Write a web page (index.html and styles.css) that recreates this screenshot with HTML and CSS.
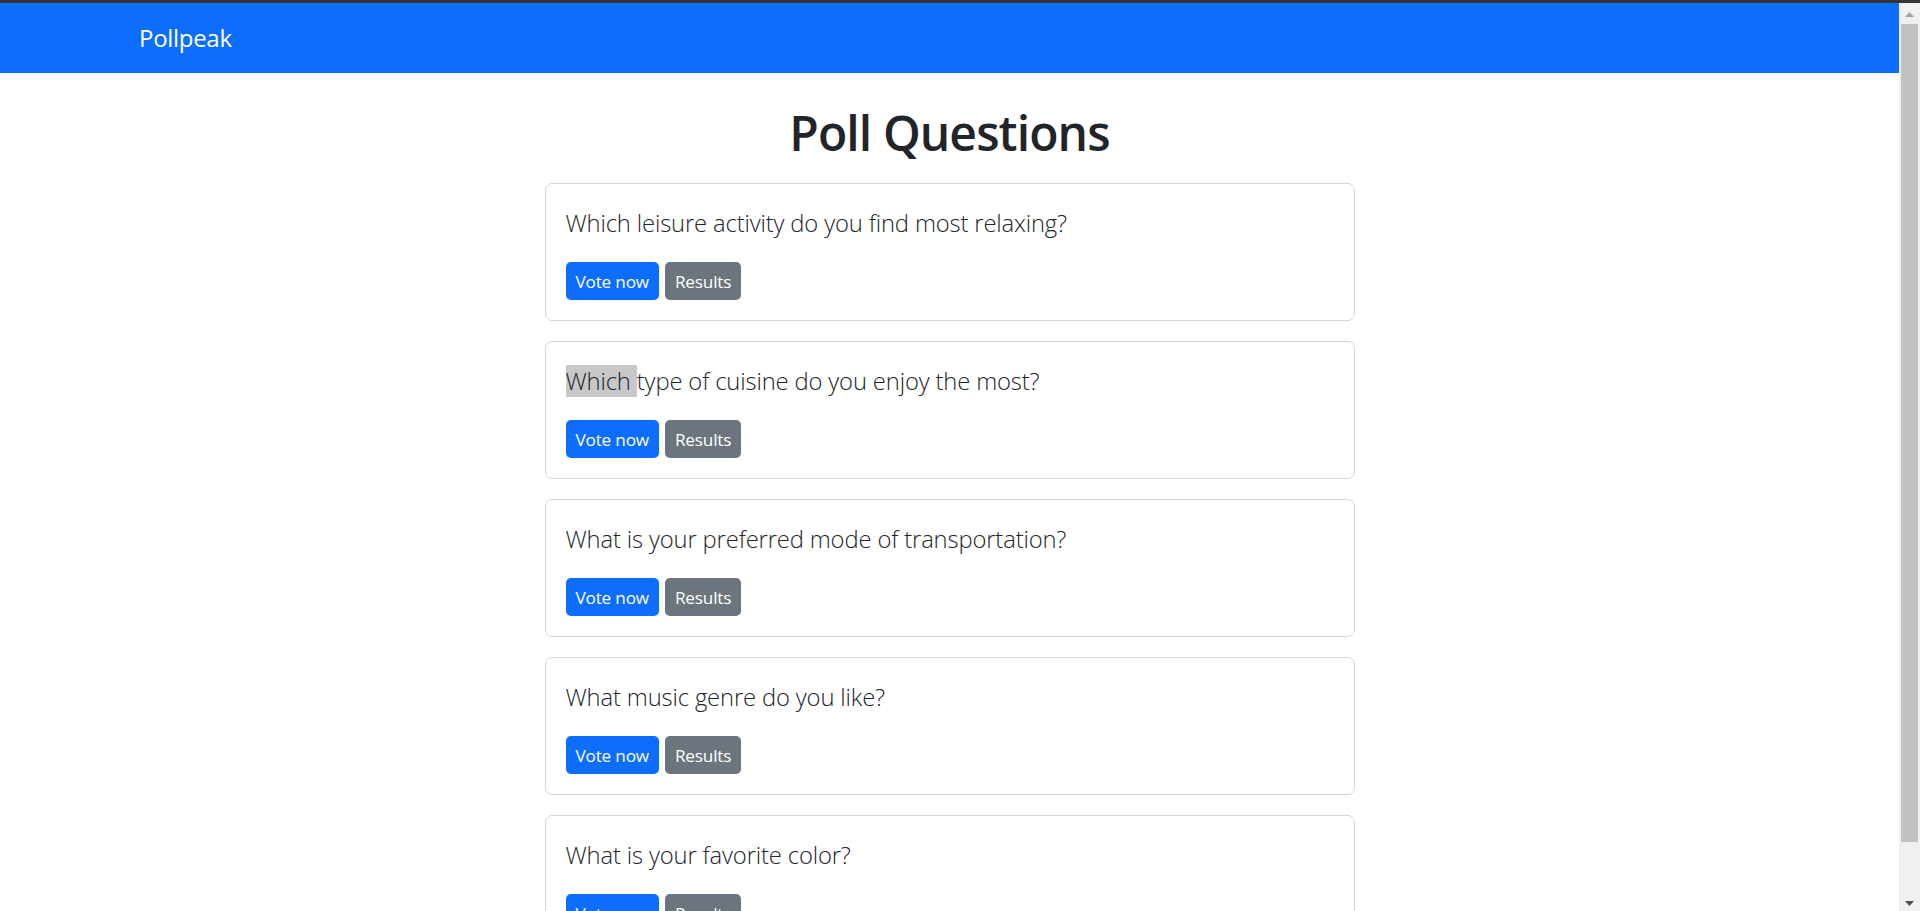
FILE: index.html
```html
<!DOCTYPE html>
<html lang="en">
<head>
<meta charset="utf-8">
<title>Pollpeak</title>
<link rel="stylesheet" href="styles.css">
</head>
<body>
<div class="window">
  <div class="top-strip"></div>
  <div class="viewport">
    <div class="page">
      <nav class="navbar">
        <a class="brand" href="#">Pollpeak</a>
      </nav>
      <main class="container">
        <h1 class="title">Poll Questions</h1>
        <div class="poll-list">
          <div class="card">
            <p class="lead">Which leisure activity do you find most relaxing?</p>
            <div class="actions">
              <a class="btn btn-primary" href="#">Vote now</a>
              <a class="btn btn-secondary" href="#">Results</a>
            </div>
          </div>
          <div class="card">
            <p class="lead"><span class="selected">Which </span>type of cuisine do you enjoy the most?</p>
            <div class="actions">
              <a class="btn btn-primary" href="#">Vote now</a>
              <a class="btn btn-secondary" href="#">Results</a>
            </div>
          </div>
          <div class="card">
            <p class="lead">What is your preferred mode of transportation?</p>
            <div class="actions">
              <a class="btn btn-primary" href="#">Vote now</a>
              <a class="btn btn-secondary" href="#">Results</a>
            </div>
          </div>
          <div class="card">
            <p class="lead">What music genre do you like?</p>
            <div class="actions">
              <a class="btn btn-primary" href="#">Vote now</a>
              <a class="btn btn-secondary" href="#">Results</a>
            </div>
          </div>
          <div class="card">
            <p class="lead">What is your favorite color?</p>
            <div class="actions">
              <a class="btn btn-primary" href="#">Vote now</a>
              <a class="btn btn-secondary" href="#">Results</a>
            </div>
          </div>
        </div>
      </main>
    </div>
    <div class="scrollbar">
      <div class="sb-button sb-up">
        <svg width="9" height="5" viewBox="0 0 9 5"><polygon points="0,5 4.5,0 9,5" fill="#a3a3a3"/></svg>
      </div>
      <div class="sb-track"><div class="sb-thumb"></div></div>
      <div class="sb-button sb-down">
        <svg width="9" height="5" viewBox="0 0 9 5"><polygon points="0,0 9,0 4.5,5" fill="#505050"/></svg>
      </div>
    </div>
  </div>
</div>
</body>
</html>
```

FILE: styles.css
```css
html, body {
  margin: 0;
  padding: 0;
  height: 100%;
  overflow: hidden;
  background: #ffffff;
}

body {
  font-family: "Open Sans", "Noto Sans", "Liberation Sans", sans-serif;
  color: #212529;
}

.window {
  height: 100vh;
  display: flex;
  flex-direction: column;
}

.top-strip {
  height: 3px;
  flex: 0 0 3px;
  background: #353535;
}

.viewport {
  flex: 1;
  min-height: 0;
  display: flex;
}

.page {
  flex: 1;
  min-width: 0;
  overflow: hidden;
}

/* Navbar */
.navbar {
  height: 70px;
  background: #0d6efd;
  display: flex;
  align-items: center;
  padding-left: 139px;
}

.brand {
  color: #ffffff;
  text-decoration: none;
  font-size: 24px;
  font-weight: 400;
  line-height: 30px;
  letter-spacing: -0.3px;
}

/* Content */
.container {
  width: 810px;
  margin: 0 auto;
  padding-bottom: 10px;
}

.title {
  margin: 30px 0 20px;
  font-size: 48px;
  font-weight: 600;
  line-height: 60px;
  text-align: center;
  color: #212529;
  letter-spacing: -0.9px;
}

.poll-list {
  display: flex;
  flex-direction: column;
  gap: 20px;
}

.card {
  border: 1px solid #d6d6d6;
  border-radius: 7px;
  padding: 20px;
}

.lead {
  margin: 0 0 20px;
  font-size: 23.8px;
  font-weight: 300;
  line-height: 38px;
  color: #212529;
  letter-spacing: -0.15px;
}

.selected {
  background: #c8c8c8;
}

.actions {
  display: flex;
  gap: 6px;
}

.btn {
  display: inline-flex;
  align-items: center;
  height: 38px;
  padding: 0 10px;
  border-radius: 5px;
  font-size: 17.2px;
  font-weight: 400;
  color: #ffffff;
  text-decoration: none;
  letter-spacing: -0.2px;
}

.btn-primary {
  background: #0d6efd;
}

.btn-secondary {
  background: #6c757d;
}

/* Scrollbar */
.scrollbar {
  width: 21px;
  flex: 0 0 21px;
  background: #f0f0f0;
  display: flex;
  flex-direction: column;
}

.sb-button {
  height: 21px;
  flex: 0 0 21px;
  display: flex;
  justify-content: center;
}

.sb-up {
  align-items: flex-start;
  padding-top: 9px;
  box-sizing: border-box;
}

.sb-down {
  align-items: flex-start;
  padding-top: 11px;
  box-sizing: border-box;
}

.sb-button svg {
  display: block;
}

.sb-track {
  flex: 1;
  padding: 0 2px;
}

.sb-thumb {
  height: 818px;
  background: #c1c1c1;
}
```
